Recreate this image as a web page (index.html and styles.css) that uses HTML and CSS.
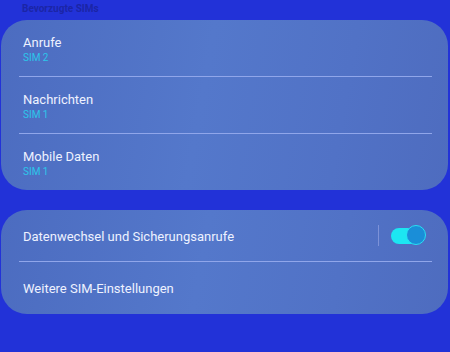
FILE: index.html
```html
<!DOCTYPE html>
<html lang="de">
<head>
    <meta charset="UTF-8">
    <meta name="viewport" content="width=device-width, initial-scale=1.0">
    <title>SIM-Manager</title>
    <link rel="stylesheet" href="styles.css">
</head>
<body>
    <div class="section-title">Bevorzugte SIMs</div>

    <div class="card">
        <div class="row">
            <div class="row-text">
                <div class="title">Anrufe</div>
                <div class="sub">SIM 2</div>
            </div>
        </div>
        <div class="row">
            <div class="row-text">
                <div class="title">Nachrichten</div>
                <div class="sub">SIM 1</div>
            </div>
        </div>
        <div class="row">
            <div class="row-text">
                <div class="title">Mobile Daten</div>
                <div class="sub">SIM 1</div>
            </div>
        </div>
    </div>

    <div class="card card-small">
        <div class="row">
            <div class="row-text">
                <div class="title">Datenwechsel und Sicherungsanrufe</div>
            </div>
            <div class="sep"></div>
            <div class="switch"><div class="knob"></div></div>
        </div>
        <div class="row">
            <div class="row-text">
                <div class="title">Weitere SIM-Einstellungen</div>
            </div>
        </div>
    </div>
</body>
</html>
```

FILE: styles.css
```css
body {
    margin: 0;
    padding: 0 2px 0 1px;
    background-color: #2232d8;
    font-family: Roboto, "Noto Sans", sans-serif;
    color: #eef2ff;
    height: 352px;
    overflow: hidden;
}

.section-title {
    height: 20px;
    padding-left: 21px;
    font-size: 10px;
    font-weight: bold;
    line-height: 17px;
    color: #1b25a6;
}

.card {
    border-radius: 26px;
    background: linear-gradient(100deg, #4c6cc0 0%, #5478cb 45%, #5172c6 75%, #4e6cbf 100%);
    margin-bottom: 20px;
}

.row {
    display: flex;
    align-items: center;
    height: 56px;
    margin: 0 16px 0 18px;
    padding: 0 4px;
    border-bottom: 1px solid #90a6ea;
}

.row:last-child {
    border-bottom: none;
}

.card-small .row {
    height: 51px;
}

.card-small .row:last-child {
    height: 52px;
}

.row-text {
    flex: 1;
    padding-top: 2px;
}

.title {
    font-size: 13px;
    line-height: 16px;
}

.sub {
    font-size: 10px;
    line-height: 13px;
    color: #2cc6ea;
}

.sep {
    width: 1px;
    height: 21px;
    background-color: #7d92d8;
    margin-right: 12px;
}

.switch {
    position: relative;
    width: 33px;
    height: 16px;
    border-radius: 8px;
    background-color: #1ce6f2;
    margin-right: 4px;
}

.knob {
    position: absolute;
    right: -2px;
    top: -3px;
    width: 18px;
    height: 18px;
    border-radius: 50%;
    background-color: #1a8ed8;
    border: 1px solid #27e0f4;
}
```
